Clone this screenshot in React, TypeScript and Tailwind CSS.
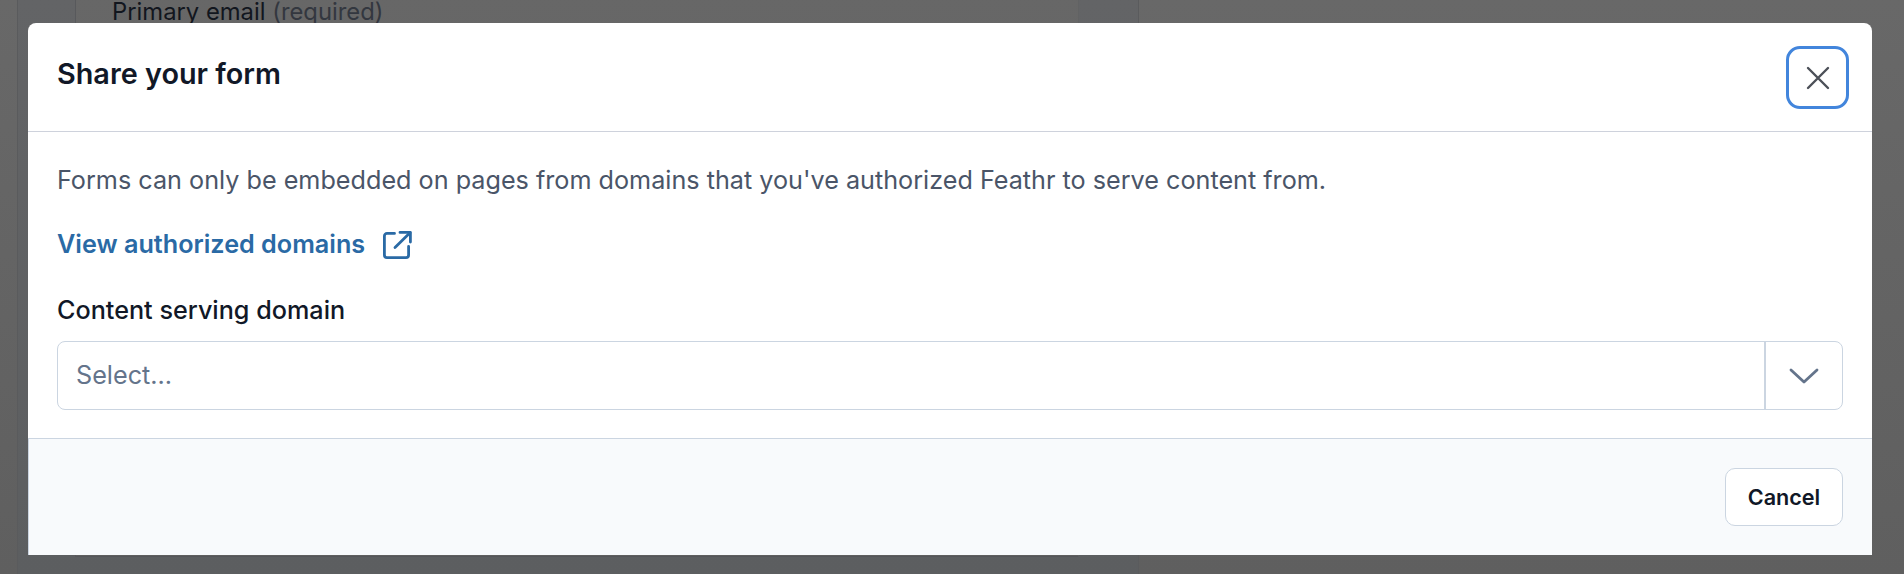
import React from "react";

const font = { fontFamily: "Inter, 'Noto Sans', sans-serif" };

function ExternalLink() {
  return (
    <svg width="30" height="30" viewBox="0 0 30 30" fill="none" stroke="#2a6aa5" strokeWidth="2.800" strokeLinecap="round" strokeLinejoin="round">
      <path d="M12.500 3.400H5a2.600 2.600 0 0 0-2.600 2.600v19a2.600 2.600 0 0 0 2.600 2.600h19a2.600 2.600 0 0 0 2.600-2.600v-8.500" />
      <path d="M18 2.400h10.400V12" />
      <path d="M28 2.800 13 17.500" />
    </svg>
  );
}

export default function App() {
  return (
    <div className="relative h-[574px] w-[1904px] overflow-hidden bg-gradient-to-b from-[#686868] to-[#5f5f5f]" style={font}>
      {/* page behind the overlay */}
      <div className="flex h-full">
        <div className="w-[17px] shrink-0" />
        <div className="h-full w-[1122px] shrink-0 border-x border-[#5a5b5d] bg-gradient-to-b from-[#636466] to-[#5c5e60] pl-[57px]">
          <div className="h-[561px] w-[1004px] border-l border-r border-b border-l-[#58595c] border-r-[#616263] border-b-[#55565a] bg-gradient-to-b from-[#676767] to-[#5f5f5f] pl-[36px]">
            <div className="mt-[-4px] text-[23.800px] leading-[32px] text-[#12161e]">
              Primary email <span className="text-[#33373f]">(required)</span>
            </div>
          </div>
        </div>
      </div>

      {/* dialog */}
      <div className="absolute left-[28px] top-[23px] flex h-[532px] w-[1844px] flex-col rounded-t-[8px] bg-white">
        <div className="flex h-[109px] shrink-0 items-start justify-between border-b border-[#ced2dc] pl-[29px] pr-[23px] pt-[23px]">
          <h2 className="text-[28.800px] font-semibold leading-[56px] text-[#111827]">Share your form</h2>
          <button className="flex h-[63px] w-[63px] items-center justify-center rounded-[14px] border-[3px] border-[#4285dc]">
            <svg width="24" height="24" viewBox="0 0 24 24" fill="none" stroke="#4c5058" strokeWidth="2.400" strokeLinecap="round">
              <path d="M2 2 22 22M22 2 2 22" />
            </svg>
          </button>
        </div>

        <div className="flex flex-1 flex-col px-[29px] pt-[30px]">
          <p className="text-[25.200px] leading-[36px] text-[#4a5568]">
            Forms can only be embedded on pages from domains that you've authorized Feathr to serve content from.
          </p>
          <a className="mt-[29px] flex h-[36px] items-center gap-[17px] text-[25.200px] font-semibold text-[#2a6aa5]">
            View authorized domains
            <ExternalLink />
          </a>
          <label className="mt-[29px] text-[25.200px] font-medium leading-[36px] text-[#111827]">Content serving domain</label>
          <div className="mt-[13px] flex h-[69px] rounded-[8px] border border-[#cbd5e1] bg-white">
            <div className="flex flex-1 items-center border-r-2 border-[#cbd5e1] pl-[18px] text-[25.200px] text-[#64748b]">Select...</div>
            <div className="flex w-[76px] items-center justify-center">
              <svg width="30" height="18" viewBox="0 0 30 18" fill="none" stroke="#64748b" strokeWidth="2.800" strokeLinecap="round" strokeLinejoin="round">
                <path d="M2 3 15 15 28 3" />
              </svg>
            </div>
          </div>
        </div>

        <div className="flex h-[117px] shrink-0 items-start justify-end border-t border-l border-[#cbd5e1] bg-[#f8fafc] pr-[29px] pt-[29px]">
          <button className="h-[58px] w-[118px] rounded-[10px] border border-[#cbd5e1] bg-white text-[21.600px] font-semibold text-[#111827]">Cancel</button>
        </div>
      </div>
    </div>
  );
}
